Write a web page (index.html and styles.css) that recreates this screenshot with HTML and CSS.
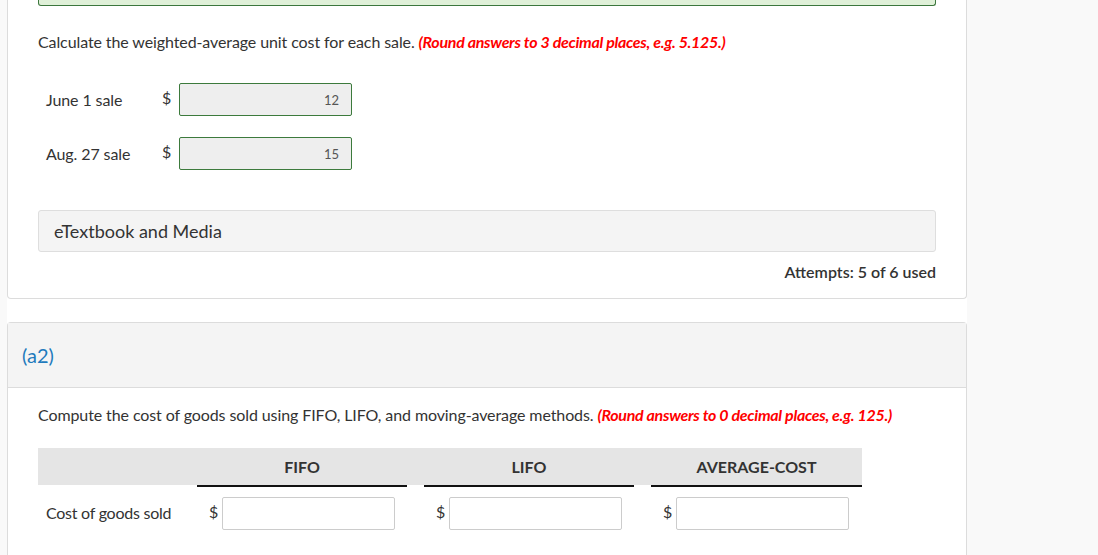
FILE: index.html
```html
<!DOCTYPE html>
<html>
<head>
<meta charset="utf-8">
<link rel="stylesheet" href="styles.css">
</head>
<body>
<div class="page">
  <main class="main">
    <section class="card card-first">
      <div class="success-box"></div>
      <p class="instr">Calculate the weighted-average unit cost for each sale. <em class="hint">(Round answers to 3 decimal places, e.g. 5.125.)</em></p>
      <div class="rows">
        <div class="row">
          <span class="label">June 1 sale</span>
          <span class="dollar">$</span>
          <div class="input correct">12</div>
        </div>
        <div class="row">
          <span class="label">Aug. 27 sale</span>
          <span class="dollar">$</span>
          <div class="input correct">15</div>
        </div>
      </div>
      <div class="media">eTextbook and Media</div>
      <div class="attempts">Attempts: 5 of 6 used</div>
    </section>

    <section class="card card-second">
      <header class="card-head">(a2)</header>
      <div class="card-body">
        <p class="instr">Compute the cost of goods sold using FIFO, LIFO, and moving-average methods. <em class="hint">(Round answers to 0 decimal places, e.g. 125.)</em></p>
        <div class="table">
          <div class="thead">
            <div class="th"></div>
            <div class="th">FIFO</div>
            <div class="th">LIFO</div>
            <div class="th">AVERAGE-COST</div>
          </div>
          <div class="tbody">
            <div class="td label-cell">Cost of goods sold</div>
            <div class="td val"><span class="dollar2">$</span><div class="input blank"></div></div>
            <div class="td val"><span class="dollar2">$</span><div class="input blank"></div></div>
            <div class="td val"><span class="dollar2">$</span><div class="input blank"></div></div>
          </div>
        </div>
      </div>
    </section>
  </main>
  <aside class="side"></aside>
</div>
</body>
</html>
```

FILE: styles.css
```css
* { box-sizing: border-box; }
html, body { margin: 0; padding: 0; }
body {
  background: #f9f9f9;
  font-family: Lato, "Open Sans", "Liberation Sans", sans-serif;
  color: #333;
  height: 555px;
  overflow: hidden;
}
.page {
  display: flex;
  padding-left: 7px;
  height: 555px;
}
.main {
  width: 960px;
  background: #fff;
  display: flex;
  flex-direction: column;
}
.side { flex: 1; }

.card {
  border: 1px solid #dcdcdc;
  border-radius: 4px;
  background: #fff;
}
.card-first {
  border-top: none;
  border-radius: 0 0 4px 4px;
  padding: 0 30px 16px 30px;
}
.success-box {
  height: 6px;
  background: #dff0d8;
  border: 1px solid #3c763d;
  border-top: none;
  border-radius: 0 0 3px 3px;
}
.instr {
  margin: 0;
  font-size: 16px;
  line-height: 20px;
  letter-spacing: -0.1px;
}
.card-first .instr { margin-top: 26px; }
.hint {
  color: #ff0000;
  font-weight: 700;
  font-style: italic;
  letter-spacing: -0.3px;
}
.rows {
  margin-top: 31px;
  display: flex;
  flex-direction: column;
  gap: 21px;
}
.row {
  display: flex;
  align-items: center;
  height: 33px;
  padding-left: 8px;
}
.label {
  width: 116px;
  font-size: 16px;
  letter-spacing: -0.1px;
}
.dollar {
  width: 17px;
  font-size: 16px;
  margin-top: -4px;
}
.input {
  height: 33px;
  width: 173px;
  border-radius: 2px;
  font-size: 13px;
  color: #555;
  display: flex;
  align-items: center;
  justify-content: flex-end;
  padding-right: 12px;
}
.input.correct {
  background: #eeeeee;
  border: 1px solid #3c7a3c;
}
.input.blank {
  background: #fff;
  border: 1px solid #cccccc;
}
.media {
  margin-top: 40px;
  height: 42px;
  background: #f4f4f4;
  border: 1px solid #dedede;
  border-radius: 3px;
  font-size: 18px;
  display: flex;
  align-items: center;
  padding-left: 15px;
}
.attempts {
  margin-top: 10px;
  text-align: right;
  font-size: 16px;
  line-height: 20px;
  font-weight: 600;
}

.card-second {
  margin-top: 23px;
  border-bottom: none;
  border-radius: 4px 4px 0 0;
  flex: 1;
}
.card-head {
  height: 65px;
  background: #f4f4f4;
  border-bottom: 1px solid #dcdcdc;
  color: #1f7bbd;
  font-size: 20px;
  display: flex;
  align-items: center;
  padding-left: 14px;
}
.card-body {
  padding: 17px 30px 0 30px;
}
.table { margin-top: 23px; }
.thead, .tbody {
  display: grid;
  grid-template-columns: 142px 210px 210px 211px;
  column-gap: 17px;
  width: 824px;
}
.thead {
  background: #e5e5e5;
  height: 37px;
}
.th {
  display: flex;
  align-items: center;
  justify-content: center;
  font-size: 16px;
  font-weight: 700;
  color: #333;
}
.tbody { height: 46px; }
.td {
  display: flex;
  align-items: center;
}
.label-cell {
  padding-left: 8px;
  padding-top: 9px;
  font-size: 16px;
  letter-spacing: -0.25px;
}
.val {
  border-top: 2px solid #111;
  padding-top: 10px;
  align-items: flex-start;
}
.dollar2 {
  width: 25px;
  padding-left: 12px;
  font-size: 16px;
  line-height: 30px;
}
```
